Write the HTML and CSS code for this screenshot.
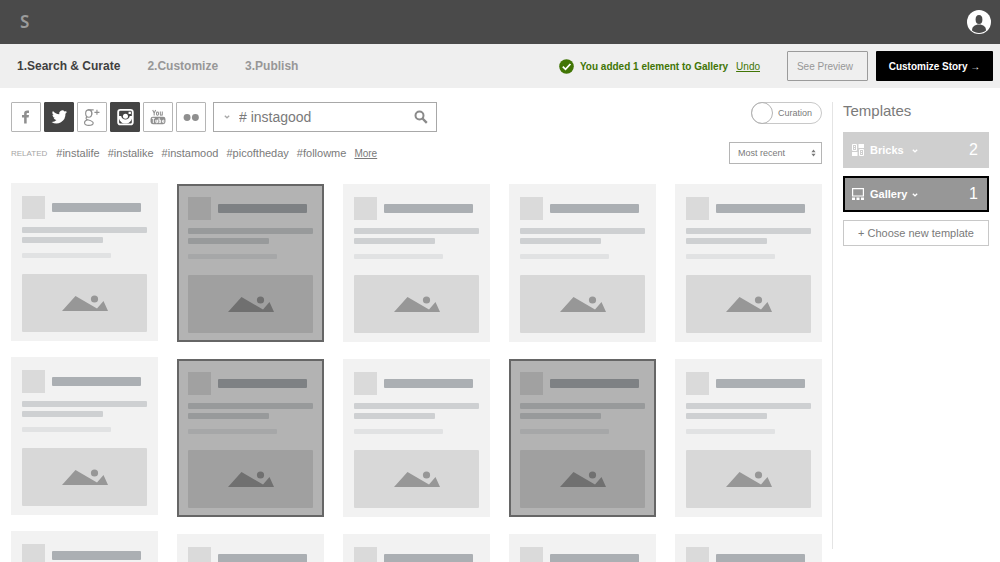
FILE: index.html
```html
<!DOCTYPE html>
<html lang="en">
<head>
<meta charset="utf-8">
<meta name="viewport" content="width=device-width, initial-scale=1">
<title>Search &amp; Curate</title>
<link rel="stylesheet" href="styles.css">
</head>
<body>
<svg class="sprite" aria-hidden="true">
  <symbol id="mountains" viewBox="0 0 46 16"><path d="M0 16 13.500 1 35 13.500 41.500 6 46 16Z"/><circle cx="32.500" cy="4" r="3.600"/></symbol>
  <symbol id="chevron" viewBox="0 0 6 4"><path d="M.8.8 3 2.800 5.200.8" fill="none" stroke="currentColor" stroke-width="1.300"/></symbol>
</svg>

<header class="topbar">
  <a class="logo" href="#">S</a>
  <button class="account" type="button" aria-label="Account">
    <svg viewBox="0 0 24 24"><circle cx="12" cy="12" r="12" fill="#fff"/><ellipse cx="12" cy="9.500" rx="3.400" ry="4.500" fill="#4a4a4a"/><path d="M5 20.500C5 16.500 7.500 15.500 10.300 14.500h3.400C16.500 15.500 19 16.500 19 20.500 15.500 23.700 8.500 23.700 5 20.500Z" fill="#4a4a4a"/></svg>
  </button>
</header>

<div class="stepbar">
  <nav class="steps">
    <a class="step current" href="#">1.Search &amp; Curate</a>
    <a class="step" href="#">2.Customize</a>
    <a class="step" href="#">3.Publish</a>
  </nav>
  <p class="notice">
    <svg class="check" viewBox="0 0 15 15"><circle cx="7.500" cy="7.500" r="7.300" fill="#417505"/><path d="M3.800 7.700 6.500 10.300 11.400 5" fill="none" stroke="#fff" stroke-width="1.800"/></svg>
    <strong>You added 1 element to Gallery</strong>
    <a href="#">Undo</a>
  </p>
  <button class="preview" type="button">See Preview</button>
  <button class="customize" type="button">Customize Story →</button>
</div>

<div class="workspace">
  <main class="content">
    <div class="toolbar">
      <div class="networks">
        <button class="network" type="button" aria-label="Facebook"><svg viewBox="0 0 30 30"><path d="M13 22v-6.500h-2.300v-2.700H13v-1.600C13 8.800 14.300 8 16.200 8h2v2.600h-1.300c-.9 0-1.200.3-1.200 1v1.200h2.500l-.4 2.700h-2.100V22Z"/></svg></button>
        <button class="network on" type="button" aria-label="Twitter"><svg viewBox="0 0 30 30"><path d="M23.600 9.500c-.6.3-1.200.5-1.900.5.7-.4 1.200-1 1.400-1.800-.6.400-1.300.7-2.100.8a3.300 3.300 0 0 0-5.700 3c-2.800-.1-5.200-1.400-6.800-3.500a3.300 3.300 0 0 0 1 4.500c-.5 0-1-.2-1.500-.4 0 1.600 1.100 3 2.700 3.300-.5.1-1 .1-1.500 0 .4 1.300 1.600 2.300 3.100 2.300A6.800 6.800 0 0 1 7 20.300a9.700 9.700 0 0 0 14.900-8.700c.7-.5 1.200-1.200 1.700-2.100Z"/></svg></button>
        <button class="network" type="button" aria-label="Google Plus"><svg viewBox="0 0 30 30"><g fill="none" stroke="currentColor" stroke-width="1.200"><ellipse cx="11.500" cy="11.300" rx="3.300" ry="3.900"/><path d="M10.500 7.400h6.300M13.600 8.200C15 9.500 15.300 11 14.800 12.500M9.700 14.800C7.800 16.300 8.500 17.400 10.500 18 14 19 16.300 19.500 16.300 21.500S14 24 11.500 24 7 23 7 21.200s1.500-2.700 3.500-3.200"/><path d="M20.300 7.300v5.400M17.600 10h5.400"/></g></svg></button>
        <button class="network on" type="button" aria-label="Instagram"><svg viewBox="0 0 30 30"><rect x="7.700" y="7.300" width="15.600" height="15.600" rx="2.300" fill="none" stroke="currentColor" stroke-width="2"/><path d="M8.500 14h2.400a4.700 4.700 0 0 0 9.200 0h2.400v2.500c-1 3-3 5.500-7 5.500s-6-2.500-7-5.500ZM18.800 9.300h2.500v2.500h-2.500Z"/><circle cx="15.500" cy="14.300" r="2.700"/></svg></button>
        <button class="network" type="button" aria-label="YouTube"><svg viewBox="0 0 30 30"><g fill="none" stroke="currentColor" stroke-width="1.100"><path d="m9.300 7.500 1.600 3.300v2.700M12.500 7.500l-1.600 3.300"/><rect x="13.400" y="9.600" width="2.100" height="3.500" rx="1"/><path d="M17.500 9.200v3.200c0 1 1.300.8 2 0M19.600 9.200v4.300"/></g><rect x="7" y="14.700" width="16" height="8" rx="2.500"/><g fill="none" stroke="#fff" stroke-width="1"><path d="M8.500 16.500h3M10 16.500v5M12.700 18v2.600c0 .7 1 .6 1.500 0V18v3.400M16.200 16v5.200M16.300 18.400h1.500v2.600h-1.500M21.600 20.300c-.2 1-1.800.9-1.800 0v-1.200c0-1 1.800-1 1.800.4h-1.800"/></g></svg></button>
        <button class="network" type="button" aria-label="Flickr"><svg viewBox="0 0 30 30"><circle cx="10.800" cy="15.500" r="3.700"/><circle cx="19.700" cy="15.500" r="3.700"/></svg></button>
      </div>
      <form class="search">
        <button type="button" class="kind" aria-label="Search type"><svg viewBox="0 0 6 4"><use href="#chevron"/></svg></button>
        <input type="text" aria-label="Search" value="# instagood">
        <button type="button" class="find" aria-label="Find"><svg viewBox="0 0 14 14"><circle cx="5.500" cy="5.500" r="4" fill="none" stroke="currentColor" stroke-width="2"/><path d="m8.500 8.500 4.300 4.300" stroke="currentColor" stroke-width="2.400"/></svg></button>
      </form>
      <label class="curation"><input type="checkbox" role="switch"><span>Curation</span></label>
    </div>

    <div class="filters">
      <span class="caption">RELATED</span>
      <nav class="tags">
        <a href="#">#instalife</a>
        <a href="#">#instalike</a>
        <a href="#">#instamood</a>
        <a href="#">#picoftheday</a>
        <a href="#">#followme</a>
        <a class="more" href="#">More</a>
      </nav>
      <div class="sort">
        <select aria-label="Sort by"><option>Most recent</option><option>Most popular</option></select>
        <svg viewBox="0 0 5 8"><path d="M2.500.5 4.600 3.300H.4ZM2.500 7.500.4 4.700h4.200Z"/></svg>
      </div>
    </div>

    <div class="feed">
      <div class="column">
        <article class="card"><div class="who"><i class="avatar"></i><i class="name"></i></div><i class="line"></i><i class="line short"></i><i class="line meta"></i><div class="photo"><svg><use href="#mountains"/></svg></div></article>
        <article class="card"><div class="who"><i class="avatar"></i><i class="name"></i></div><i class="line"></i><i class="line short"></i><i class="line meta"></i><div class="photo"><svg><use href="#mountains"/></svg></div></article>
        <article class="card"><div class="who"><i class="avatar"></i><i class="name"></i></div><i class="line"></i><i class="line short"></i><i class="line meta"></i><div class="photo"><svg><use href="#mountains"/></svg></div></article>
      </div>
      <div class="column">
        <article class="card selected"><div class="who"><i class="avatar"></i><i class="name"></i></div><i class="line"></i><i class="line short"></i><i class="line meta"></i><div class="photo"><svg><use href="#mountains"/></svg></div></article>
        <article class="card selected"><div class="who"><i class="avatar"></i><i class="name"></i></div><i class="line"></i><i class="line short"></i><i class="line meta"></i><div class="photo"><svg><use href="#mountains"/></svg></div></article>
        <article class="card"><div class="who"><i class="avatar"></i><i class="name"></i></div><i class="line"></i><i class="line short"></i><i class="line meta"></i><div class="photo"><svg><use href="#mountains"/></svg></div></article>
      </div>
      <div class="column">
        <article class="card"><div class="who"><i class="avatar"></i><i class="name"></i></div><i class="line"></i><i class="line short"></i><i class="line meta"></i><div class="photo"><svg><use href="#mountains"/></svg></div></article>
        <article class="card"><div class="who"><i class="avatar"></i><i class="name"></i></div><i class="line"></i><i class="line short"></i><i class="line meta"></i><div class="photo"><svg><use href="#mountains"/></svg></div></article>
        <article class="card"><div class="who"><i class="avatar"></i><i class="name"></i></div><i class="line"></i><i class="line short"></i><i class="line meta"></i><div class="photo"><svg><use href="#mountains"/></svg></div></article>
      </div>
      <div class="column">
        <article class="card"><div class="who"><i class="avatar"></i><i class="name"></i></div><i class="line"></i><i class="line short"></i><i class="line meta"></i><div class="photo"><svg><use href="#mountains"/></svg></div></article>
        <article class="card selected"><div class="who"><i class="avatar"></i><i class="name"></i></div><i class="line"></i><i class="line short"></i><i class="line meta"></i><div class="photo"><svg><use href="#mountains"/></svg></div></article>
        <article class="card"><div class="who"><i class="avatar"></i><i class="name"></i></div><i class="line"></i><i class="line short"></i><i class="line meta"></i><div class="photo"><svg><use href="#mountains"/></svg></div></article>
      </div>
      <div class="column">
        <article class="card"><div class="who"><i class="avatar"></i><i class="name"></i></div><i class="line"></i><i class="line short"></i><i class="line meta"></i><div class="photo"><svg><use href="#mountains"/></svg></div></article>
        <article class="card"><div class="who"><i class="avatar"></i><i class="name"></i></div><i class="line"></i><i class="line short"></i><i class="line meta"></i><div class="photo"><svg><use href="#mountains"/></svg></div></article>
        <article class="card"><div class="who"><i class="avatar"></i><i class="name"></i></div><i class="line"></i><i class="line short"></i><i class="line meta"></i><div class="photo"><svg><use href="#mountains"/></svg></div></article>
      </div>
    </div>
  </main>

  <aside class="templates">
    <h2>Templates</h2>
    <button class="template" type="button">
      <svg class="kind-icon" viewBox="0 0 12 12"><g fill="none" stroke="currentColor"><path d="M.5.500h4v6h-4ZM7.500 5.500h4v6h-4Z"/></g><path d="M6.500 0H12v4H6.500ZM0 8h5.500v4H0ZM2 2h1v1H2ZM2 4h1v1H2ZM9 7h1v1H9ZM9 9h1v1H9Z"/></svg>
      <span class="label">Bricks</span>
      <svg class="arrow" viewBox="0 0 6 4"><use href="#chevron"/></svg>
      <span class="count">2</span>
    </button>
    <button class="template active" type="button">
      <svg class="kind-icon" viewBox="0 0 12 12"><path d="M.6.6h10.800v7.400H.6Z" fill="none" stroke="currentColor" stroke-width="1.200"/><path d="M0 9.500h3V12H0ZM4.500 9.500h3V12h-3ZM9 9.500h3V12H9Z"/></svg>
      <span class="label">Gallery</span>
      <svg class="arrow" viewBox="0 0 6 4"><use href="#chevron"/></svg>
      <span class="count">1</span>
    </button>
    <button class="new-template" type="button">+ Choose new template</button>
  </aside>
</div>
</body>
</html>
```
FILE: styles.css
```css
* { box-sizing: border-box; }

body {
  margin: 0;
  height: 100vh;
  display: flex;
  flex-direction: column;
  overflow: hidden;
  background: #fff;
  color: #7a7a7a;
  font-family: "Liberation Sans", Arial, sans-serif;
  font-size: 11px;
}

button, input, select {
  font: inherit;
  color: inherit;
  margin: 0;
  padding: 0;
  border: 0;
  background: none;
}

a { color: inherit; text-decoration: none; }
svg { display: block; fill: currentColor; }
.sprite { display: none; }

.topbar {
  flex: none;
  height: 44px;
  padding: 0 9px 0 20px;
  display: flex;
  align-items: center;
  justify-content: space-between;
  background: #4a4a4a;
}
.logo { color: #9b9b9b; font: 600 17px/40px "Noto Sans", sans-serif; }
.account, .account svg { width: 24px; height: 24px; }

.stepbar {
  flex: none;
  height: 44px;
  padding: 0 7px 0 17px;
  display: flex;
  align-items: center;
  background: #efefef;
}
.steps { display: flex; gap: 27px; margin-right: auto; font-size: 12px; font-weight: bold; }
.step { color: #979797; }
.step.current { color: #3f3f3f; }
.notice { display: flex; align-items: center; margin: 0 27px 0 0; color: #417505; font-size: 10px; }
.notice a { margin-left: 8px; text-decoration: underline; }
.check { width: 15px; height: 15px; margin-right: 6px; }
.preview {
  width: 81px;
  height: 30px;
  padding-right: 5px;
  margin-right: 8px;
  border: 1px solid #9b9b9b;
  border-radius: 1px;
  color: #979797;
  font-size: 10px;
}
.customize {
  width: 117px;
  height: 30px;
  border-radius: 1px;
  background: #000;
  color: #fff;
  font-size: 10px;
  font-weight: bold;
}

.workspace { flex: 1; min-height: 0; display: flex; padding-top: 14px; }
.content { flex: 1; min-width: 0; padding: 0 10px 0 11px; overflow: hidden; }

.toolbar { display: flex; align-items: flex-start; }
.networks { display: flex; gap: 3px; margin-right: 7px; }
.network { width: 30px; height: 30px; border: 1px solid #b5b5b5; border-radius: 1px; color: #8f8f8f; }
.network svg { width: 28px; height: 28px; }
.network.on { border-color: #444; background: #444; color: #fff; }

.search {
  width: 224px;
  height: 30px;
  display: flex;
  align-items: center;
  border: 1px solid #a8a8a8;
}
.kind { padding: 0 9px 0 10px; color: #a8a8a8; }
.kind svg { width: 6px; height: 4px; }
.search input { flex: 1; min-width: 0; font-size: 14px; outline: 0; }
.find { padding-right: 8px; color: #8a8a8a; }
.find svg { width: 14px; height: 14px; }

.curation {
  width: 71px;
  height: 22px;
  margin-left: auto;
  display: flex;
  align-items: center;
  gap: 5px;
  border: 1px solid #c8c8c8;
  border-radius: 11px;
  font-size: 9px;
}
.curation input {
  appearance: none;
  width: 22px;
  height: 22px;
  margin-left: -1px;
  border: 1px solid #b4b4b4;
  border-radius: 50%;
}

.filters { display: flex; align-items: center; height: 22px; margin: 10px 0 19px; }
.caption { margin-right: 9px; color: #a5a5a5; font-size: 8px; }
.tags { display: flex; align-items: center; gap: 8px; margin-right: auto; }
.more { font-size: 10px; text-decoration: underline; }
.sort { position: relative; width: 93px; height: 22px; }
.sort select {
  appearance: none;
  width: 100%;
  height: 100%;
  padding-left: 8px;
  border: 1px solid #b5b5b5;
  border-radius: 0;
  font-size: 9px;
}
.sort svg { position: absolute; right: 6px; top: 7px; width: 5px; height: 8px; pointer-events: none; }

.feed { display: grid; grid-template-columns: repeat(5, 1fr); column-gap: 19px; }
.column { display: flex; flex-direction: column; gap: 17px; padding-top: 1px; }
.column:first-child { gap: 16px; padding-top: 0; }
.card { position: relative; padding: 13px 11px 9px; background: #f2f2f2; }
.who { display: flex; align-items: center; gap: 7px; margin-bottom: 8px; }
.avatar { width: 23px; height: 23px; background: #dadada; }
.name { width: 71%; height: 9px; border-radius: 1px; background: #abafb3; }
.line { display: block; height: 6px; margin-bottom: 4px; border-radius: 1px; background: #ced0d2; }
.line.short { width: 65%; margin-bottom: 10px; }
.line.meta { width: 71%; height: 5px; margin-bottom: 16px; background: #e1e2e3; }
.photo {
  height: 58px;
  display: flex;
  align-items: center;
  justify-content: center;
  border-radius: 1px;
  background: #d8d8d8;
  color: #979797;
}
.photo svg { width: 46px; height: 16px; }
.card.selected::after {
  content: "";
  position: absolute;
  inset: 0;
  border: 2px solid #666;
  background: rgba(0, 0, 0, 0.26);
}

.templates {
  width: 168px;
  margin-bottom: 13px;
  padding: 0 11px 0 10px;
  display: flex;
  flex-direction: column;
  gap: 8px;
  border-left: 1px solid #e4e4e4;
}
h2 { margin: 0 0 4px; font-size: 15px; font-weight: normal; line-height: 18px; }
.template {
  height: 36px;
  padding: 0 11px 0 9px;
  display: flex;
  align-items: center;
  background: #cfcfcf;
  color: #fff;
}
.template.active { background: #979797; box-shadow: inset 0 0 0 2px #000; }
.kind-icon { width: 12px; height: 12px; margin-right: 6px; }
.label { min-width: 37px; font-weight: bold; text-align: left; }
.arrow { width: 6px; height: 4px; margin: 2px 0 0 5px; }
.count { margin-left: auto; font-size: 16px; }
.new-template { height: 26px; border: 1px solid #c8c8c8; }
```
